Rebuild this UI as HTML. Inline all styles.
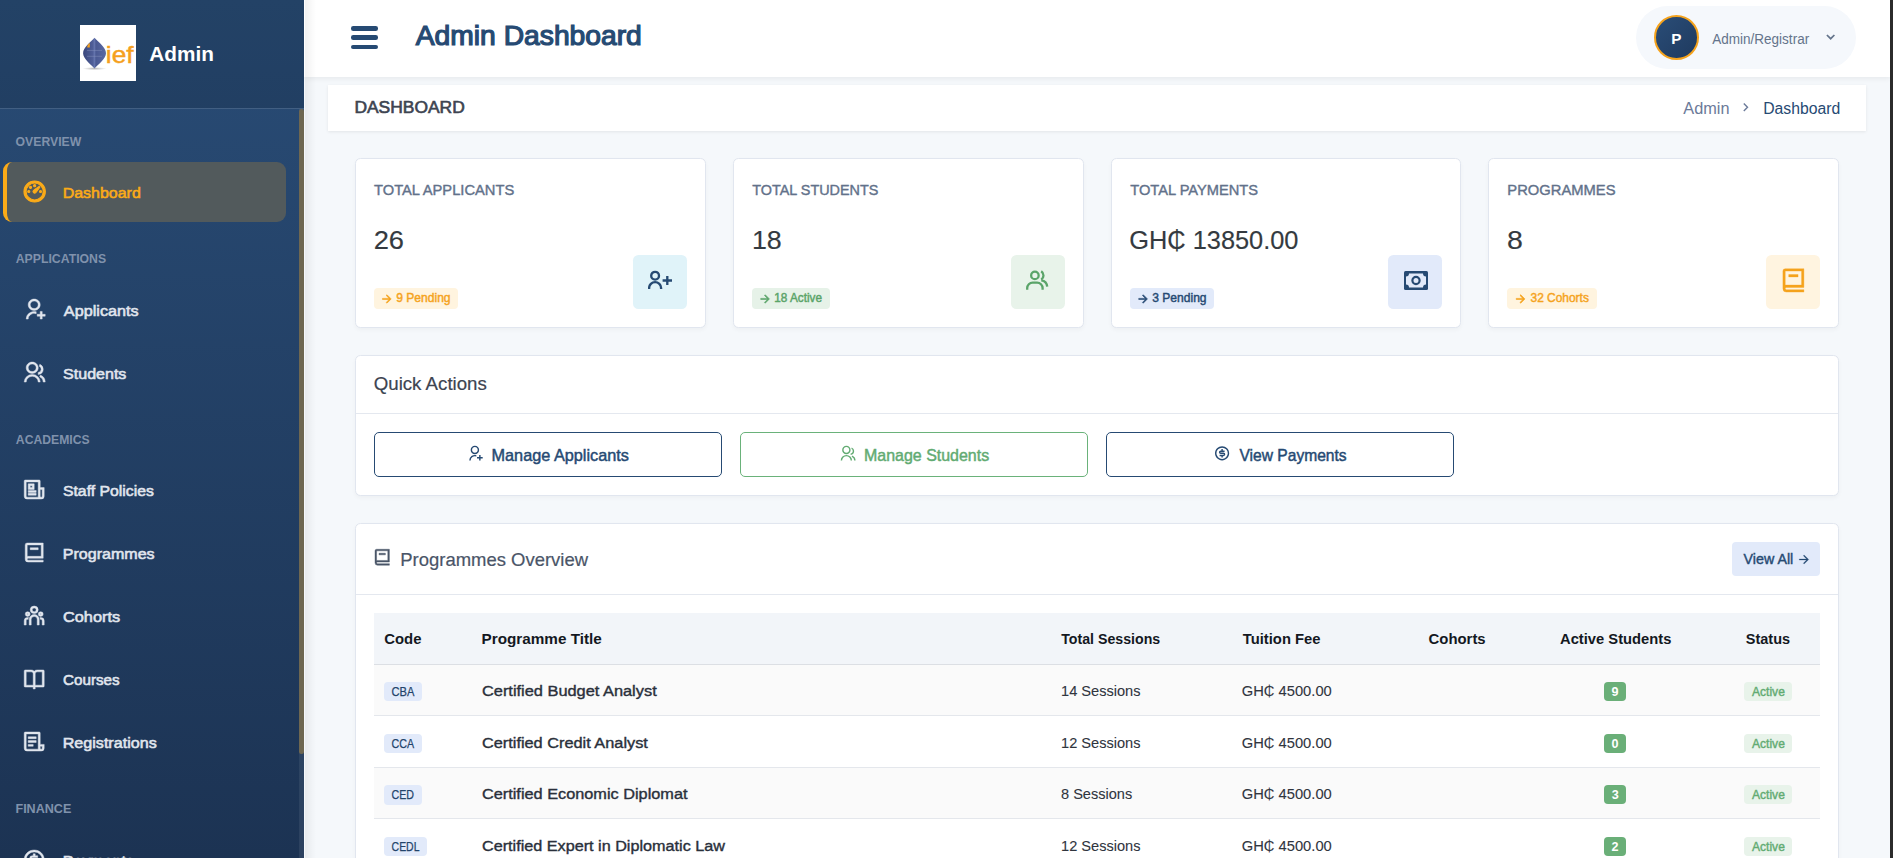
<!DOCTYPE html>
<html lang="en">
<head>
<meta charset="utf-8">
<title>Admin Dashboard</title>
<style>
*{box-sizing:border-box;margin:0;padding:0}
html,body{width:1893px;height:858px;overflow:hidden}
body{position:relative;background:#f5f8fb;font-family:"Liberation Sans",sans-serif;color:#343a40}
.abs,.t{position:absolute}
.t{white-space:nowrap;line-height:1;transform-origin:0 0}
#sidebar{position:absolute;left:0;top:0;width:304px;height:858px;background:linear-gradient(180deg,#294c76 0%,#1c3353 100%);overflow:hidden}
#sbhead{position:absolute;left:0;top:0;width:304px;height:108px;background:rgba(0,0,0,.13)}
#sbline{position:absolute;left:0;top:108px;width:304px;height:1px;background:rgba(255,255,255,.12)}
#logo{position:absolute;left:80px;top:25px;width:56px;height:56px;background:#fff;overflow:hidden}
#active{position:absolute;left:3px;top:162px;width:283px;height:60px;border-radius:9px;background:#525a5c;border-left:4.300px solid #fbab18}
#sbtrack{position:absolute;left:299px;top:109px;width:5px;height:749px;background:rgba(255,255,255,.07)}
#sbthumb{position:absolute;left:299px;top:109px;width:5px;height:644.500px;background:#6e6751;border-radius:2.500px}
#topbar{position:absolute;left:304px;top:0;width:1586px;height:77px;background:#fff;box-shadow:0 2px 5px rgba(0,0,0,.06)}
#rightbar{position:absolute;left:1889.500px;top:0;width:3.500px;height:858px;background:#2b2b2b}
#sbshadow{position:absolute;left:305px;top:0;width:11px;height:858px;background:linear-gradient(90deg,rgba(0,0,0,.055),rgba(0,0,0,0))}
.hb{position:absolute;left:351.250px;width:26.750px;height:4.500px;border-radius:2.250px;background:#264a73}
#pill{position:absolute;left:1636px;top:6px;width:220px;height:63px;border-radius:32px;background:#f5f8fc}
#avatar{position:absolute;left:1654.200px;top:15px;width:44.800px;height:44.800px;border-radius:50%;background:linear-gradient(135deg,#2a4d77,#1f3a5f);border:2.200px solid #f5a31d}
.card{position:absolute;background:#fff;border:1px solid #e1e6ef;border-radius:5.500px;box-shadow:0 2px 4px rgba(0,0,0,.035)}
#crumb{position:absolute;left:328px;top:85px;width:1538.300px;height:45.600px;background:#fff;box-shadow:0 1px 3px rgba(0,0,0,.08)}
.badge{position:absolute;top:288.200px;height:20.500px;border-radius:4px}
.ibox{position:absolute;top:255px;width:53.800px;height:53.800px;border-radius:5.500px}
.btn{position:absolute;top:432px;width:347.800px;height:44.800px;border-radius:5px;background:#fff;border:1.200px solid #264a73}
.hline{position:absolute;height:1px;background:#e4e8ef}
.code{position:absolute;left:384px;height:19.500px;border-radius:4px;background:#e2eafa}
.nbadge{position:absolute;left:1604.250px;width:21.750px;height:18.300px;border-radius:4px;background:#6aaf78}
.abadge{position:absolute;left:1744.250px;width:47.750px;height:18.300px;border-radius:4px;background:#e8f3ea}
</style>
</head>
<body>
<!-- sidebar -->
<div id="sidebar">
  <div id="sbhead"></div>
  <div id="sbline"></div>
  <div id="logo"><svg class="abs" style="left:0;top:0" width="56" height="56" viewBox="0 0 56 56">
<defs><linearGradient id="lg" x1="0" x2="1" y1="0" y2="0"><stop offset="0" stop-color="#39477c"/><stop offset=".42" stop-color="#4f5e98"/><stop offset=".5" stop-color="#6474ad"/><stop offset=".56" stop-color="#4a5992"/><stop offset="1" stop-color="#5a69a3"/></linearGradient>
<radialGradient id="sh" cx=".5" cy=".5" r=".5"><stop offset="0" stop-color="#000" stop-opacity=".28"/><stop offset="1" stop-color="#000" stop-opacity="0"/></radialGradient></defs>
<ellipse cx="14.500" cy="43.600" rx="12" ry="1.600" fill="url(#sh)"/>
<path d="M14.500 12.800C18.500 17.200 26 22.500 26 28.200C26 33.800 18.500 39 14.500 43.400C10.500 39 3.100 33.800 3.100 28.200C3.100 22.500 10.500 17.200 14.500 12.800z" fill="url(#lg)"/>
<path d="M7 25.400h15M7 31.300h15" stroke="#8f9bc2" stroke-width=".5" opacity=".85"/>
<path d="M7.200 22.400c0-2 1.100-3.400 2.600-4.300v4.300z" fill="#f5a01d"/>
</svg></div>
  <div id="active"></div>
  <div id="sbtrack"></div>
  <div id="sbthumb"></div>
</div>
<!-- topbar + breadcrumb -->
<div id="topbar"></div>
<div id="sbshadow"></div>
<div class="hb" style="top:26px"></div>
<div class="hb" style="top:35.250px"></div>
<div class="hb" style="top:44.500px"></div>
<div id="pill"></div>
<div id="avatar"></div>
<div id="crumb"></div>
<!-- stat cards -->
<div class="card" style="left:355px;top:158px;width:351px;height:170px"></div>
<div class="card" style="left:733px;top:158px;width:351px;height:170px"></div>
<div class="card" style="left:1111px;top:158px;width:350px;height:170px"></div>
<div class="card" style="left:1488px;top:158px;width:351px;height:170px"></div>
<div class="badge" style="left:374.25px;width:83.5px;background:#fff4df"></div>
<div class="badge" style="left:752px;width:78px;background:#e6f2e8"></div>
<div class="badge" style="left:1130px;width:84px;background:#e2eafa"></div>
<div class="badge" style="left:1507.25px;width:89.75px;background:#fff4df"></div>
<div class="ibox" style="left:633.25px;background:#e0f3f9"></div>
<div class="ibox" style="left:1011.25px;background:#e8f3ea"></div>
<div class="ibox" style="left:1388.25px;background:#e2eafa"></div>
<div class="ibox" style="left:1766.25px;background:#fff4e0"></div>
<!-- quick actions -->
<div class="card" style="left:355px;top:355px;width:1484px;height:141px"></div>
<div class="hline" style="left:356px;top:413px;width:1482px"></div>
<div class="btn" style="left:374.200px"></div>
<div class="btn" style="left:740.200px;border-color:#6ab27a"></div>
<div class="btn" style="left:1106.200px"></div>
<!-- programmes overview -->
<div class="card" style="left:355px;top:523px;width:1484px;height:400px"></div>
<div class="hline" style="left:356px;top:594px;width:1482px"></div>
<div class="abs" style="left:1732.250px;top:542px;width:87.750px;height:33.750px;border-radius:4px;background:#e2eafa"></div>
<div class="abs" style="left:374px;top:613px;width:1446px;height:51px;background:#f2f5f9"></div>
<div class="abs" style="left:374px;top:664px;width:1446px;height:1px;background:#dcdfe4"></div>
<div class="abs" style="left:374px;top:665px;width:1446px;height:50px;background:#fafafa"></div>
<div class="abs" style="left:374px;top:715px;width:1446px;height:1px;background:#e4e7ec"></div>
<div class="code" style="top:682px;width:37.9px;height:19px"></div>
<div class="nbadge" style="top:682.3px"></div>
<div class="abadge" style="top:682.3px"></div>
<div class="abs" style="left:374px;top:716px;width:1446px;height:51px;background:#fff"></div>
<div class="abs" style="left:374px;top:767px;width:1446px;height:1px;background:#e4e7ec"></div>
<div class="code" style="top:734px;width:37.9px;height:19px"></div>
<div class="nbadge" style="top:734.3px"></div>
<div class="abadge" style="top:734.3px"></div>
<div class="abs" style="left:374px;top:768px;width:1446px;height:50px;background:#fafafa"></div>
<div class="abs" style="left:374px;top:818px;width:1446px;height:1px;background:#e4e7ec"></div>
<div class="code" style="top:785px;width:37.9px;height:20px"></div>
<div class="nbadge" style="top:785.3px"></div>
<div class="abadge" style="top:785.3px"></div>
<div class="abs" style="left:374px;top:819px;width:1446px;height:51px;background:#fff"></div>
<div class="abs" style="left:374px;top:870px;width:1446px;height:1px;background:#e4e7ec"></div>
<div class="code" style="top:837px;width:42.8px;height:19px"></div>
<div class="nbadge" style="top:837.3px"></div>
<div class="abadge" style="top:837.3px"></div>
<!-- icons -->
<svg class="abs" style="left:21px;top:178px" width="28" height="28" viewBox="0 0 28 28" fill="#fbab18" stroke="#fbab18" stroke-width="1.028" stroke-linejoin="round"><path transform="translate(0.81 0.84) scale(1.0700 1.0550)" d="M12 2c5.523 0 10 4.477 10 10s-4.477 10-10 10S2 17.523 2 12 6.477 2 12 2zm0 2a8 8 0 1 0 0 16 8 8 0 0 0 0-16zm3.833 3.337a.596.596 0 0 1 .763.067.59.59 0 0 1 .063.76c-2.18 3.046-3.38 4.678-3.598 4.897a1.5 1.5 0 0 1-2.122-2.122c.374-.373 2.005-1.574 4.894-3.602zM17.5 11a1 1 0 1 1 0 2 1 1 0 0 1 0-2zm-11 0a1 1 0 1 1 0 2 1 1 0 0 1 0-2zm2.318-3.596a1 1 0 1 1-1.414 1.414 1 1 0 0 1 1.414-1.414zM12 5.5a1 1 0 1 1 0 2 1 1 0 0 1 0-2z"/></svg>
<svg class="abs" style="left:22px;top:298px" width="26" height="24" viewBox="0 0 26 24" fill="#e1e6ee" stroke="#e1e6ee" stroke-width="0.450" stroke-linejoin="round"><path transform="translate(0.20 0.10) scale(1.0000 0.9520)" d="M14 14.252v2.09A6 6 0 0 0 6 22l-2-.001a8 8 0 0 1 10-7.748zM12 13c-3.315 0-6-2.685-6-6s2.685-6 6-6 6 2.685 6 6-2.685 6-6 6zm0-2c2.21 0 4-1.79 4-4s-1.79-4-4-4-4 1.79-4 4 1.79 4 4 4zm6 6v-3h2v3h3v2h-3v3h-2v-3h-3v-2h3z"/></svg>
<svg class="abs" style="left:22px;top:361px" width="26" height="24" viewBox="0 0 26 24" fill="#e1e6ee" stroke="#e1e6ee" stroke-width="0.450" stroke-linejoin="round"><path transform="translate(0.20 0.10) scale(1.0000 0.9520)" d="M2 22a8 8 0 1 1 16 0h-2a6 6 0 1 0-12 0H2zm8-9c-3.315 0-6-2.685-6-6s2.685-6 6-6 6 2.685 6 6-2.685 6-6 6zm0-2c2.21 0 4-1.79 4-4s-1.79-4-4-4-4 1.79-4 4 1.79 4 4 4zm8.284 3.703A8.002 8.002 0 0 1 23 22h-2a6.001 6.001 0 0 0-3.537-5.473l.82-1.824zm-.688-11.29A5.5 5.5 0 0 1 21 8.5a5.499 5.499 0 0 1-5 5.478v-2.013a3.5 3.5 0 0 0 1.041-6.609l.555-1.943z"/></svg>
<svg class="abs" style="left:22px;top:478px" width="26" height="24" viewBox="0 0 26 24" fill="#e1e6ee" stroke="#e1e6ee" stroke-width="0.450" stroke-linejoin="round"><path transform="translate(0.20 0.10) scale(1.0000 0.9520)" d="M16 20V4H4v15a1 1 0 0 0 1 1h11zm3 2H5a3 3 0 0 1-3-3V3a1 1 0 0 1 1-1h14a1 1 0 0 1 1 1v7h4v9a3 3 0 0 1-3 3zm-1-10v7a1 1 0 0 0 2 0v-7h-2zM6 6h6v6H6V6zm2 2v2h2V8H8zm-2 5h8v2H6v-2zm0 3h8v2H6v-2z"/></svg>
<svg class="abs" style="left:22px;top:541px" width="26" height="24" viewBox="0 0 26 24" fill="#e1e6ee" stroke="#e1e6ee" stroke-width="0.450" stroke-linejoin="round"><path transform="translate(0.20 0.10) scale(1.0000 0.9520)" d="M21 18H6a1 1 0 0 0 0 2h15v2H6a3 3 0 0 1-3-3V4a2 2 0 0 1 2-2h16v16zM5 16.05c.162-.033.329-.05.5-.05H19V4H5v12.05zM16 9H8V7h8v2z"/></svg>
<svg class="abs" style="left:22px;top:604px" width="26" height="24" viewBox="0 0 26 24" fill="#e1e6ee" stroke="#e1e6ee" stroke-width="0.450" stroke-linejoin="round"><path transform="translate(0.20 0.10) scale(1.0000 0.9520)" d="M12 11a5 5 0 0 1 5 5v6h-2v-6a3 3 0 0 0-2.824-2.995L12 13a3 3 0 0 0-2.995 2.824L9 16v6H7v-6a5 5 0 0 1 5-5zm-6.5 3c.279 0 .55.033.81.094a5.947 5.947 0 0 0-.301 1.575L6 16v.086a1.492 1.492 0 0 0-.356-.08L5.5 16a1.5 1.5 0 0 0-1.493 1.356L4 17.5V22H2v-4.5A3.5 3.5 0 0 1 5.5 14zm13 0a3.5 3.5 0 0 1 3.5 3.500V22h-2v-4.5a1.5 1.5 0 0 0-1.356-1.493L18.5 16c-.175 0-.343.03-.5.085V16c0-.666-.108-1.306-.309-1.904.259-.063.53-.096.809-.096zm-13-6a2.5 2.5 0 1 1 0 5 2.5 2.5 0 0 1 0-5zm13 0a2.5 2.5 0 1 1 0 5 2.5 2.5 0 0 1 0-5zm-13 2a.5.5 0 1 0 0 1 .5.5 0 0 0 0-1zm13 0a.5.5 0 1 0 0 1 .5.5 0 0 0 0-1zM12 2a4 4 0 1 1 0 8 4 4 0 0 1 0-8zm0 2a2 2 0 1 0 0 4 2 2 0 0 0 0-4z"/></svg>
<svg class="abs" style="left:22px;top:667px" width="26" height="24" viewBox="0 0 26 24" fill="#e1e6ee" stroke="#e1e6ee" stroke-width="0.450" stroke-linejoin="round"><path transform="translate(0.20 0.10) scale(1.0000 0.9520)" d="M13 21v2h-2v-2H3a1 1 0 0 1-1-1V4a1 1 0 0 1 1-1h6a3.99 3.99 0 0 1 3 1.354A3.99 3.99 0 0 1 15 3h6a1 1 0 0 1 1 1v16a1 1 0 0 1-1 1h-8zm7-2V5h-5a2 2 0 0 0-2 2v12h7zm-9 0V7a2 2 0 0 0-2-2H4v14h7z"/></svg>
<svg class="abs" style="left:22px;top:730px" width="26" height="24" viewBox="0 0 26 24" fill="#e1e6ee" stroke="#e1e6ee" stroke-width="0.450" stroke-linejoin="round"><path transform="translate(0.20 0.10) scale(1.0000 0.9520)" d="M19 22H5a3 3 0 0 1-3-3V3a1 1 0 0 1 1-1h14a1 1 0 0 1 1 1v12h4v4a3 3 0 0 1-3 3zm-1-5v2a1 1 0 0 0 2 0v-2h-2zm-2 3V4H4v15a1 1 0 0 0 1 1h11zM6 7h8v2H6V7zm0 4h8v2H6v-2zm0 4h5v2H6v-2z"/></svg>
<svg class="abs" style="left:22px;top:848px" width="26" height="24" viewBox="0 0 26 24" fill="#e1e6ee" stroke="#e1e6ee" stroke-width="0.450" stroke-linejoin="round"><path transform="translate(0.20 0.10) scale(1.0000 0.9520)" d="M12 22C6.477 22 2 17.523 2 12S6.477 2 12 2s10 4.477 10 10-4.477 10-10 10zm0-2a8 8 0 1 0 0-16 8 8 0 0 0 0 16zm-3.5-6H14a.5.5 0 1 0 0-1h-4a2.5 2.5 0 1 1 0-5h1V6h2v2h2.5v2H10a.5.5 0 1 0 0 1h4a2.5 2.5 0 1 1 0 5h-1v2h-2v-2H8.5v-2z"/></svg>
<svg class="abs" style="left:648px;top:270px" width="26" height="22" viewBox="0 0 26 22" fill="none" stroke="#264a73" stroke-width="2.350"><circle cx="7.1" cy="5.7" r="3.9"/><path d="M1.1 19v-.9a6 6 0 0 1 12 0v.9"/><path d="M14.600 10.500h9.400M19.300 6v9"/></svg>
<svg class="abs" style="left:1024px;top:268px" width="26" height="24" viewBox="0 0 26 24" fill="none" stroke="#5aa469" stroke-width="2.3"><circle cx="10.9" cy="7.4" r="3.75"/><path d="M3.200 21.700v-1.600a5.500 5.500 0 0 1 5.500-5.500h4.400a5.500 5.500 0 0 1 5.500 5.500v1.600"/><path d="M17.200 3.200a5 5 0 0 1 0 8.400"/><path d="M17.300 12.300A7 7 0 0 1 23.200 18.700"/></svg>
<svg class="abs" style="left:1404px;top:271px" width="24" height="19" viewBox="0 0 24 19"><rect x="0" y="0" width="24" height="19" rx="1.5" fill="#264a73"/><path d="M5 2.500h14a3 3 0 0 0 3 3v8a3 3 0 0 0-3 3H5a3 3 0 0 0-3-3v-8a3 3 0 0 0 3-3z" fill="#e2eafa"/><circle cx="12" cy="9.500" r="3.600" fill="none" stroke="#264a73" stroke-width="2.200"/></svg>
<svg class="abs" style="left:1779px;top:266px" width="30" height="30" viewBox="0 0 30 30" fill="#f5a31d" stroke="#f5a31d" stroke-width="0.300" stroke-linejoin="round"><path transform="translate(0.40 0.40) scale(1.1667 1.1667)" d="M21 18H6a1 1 0 0 0 0 2h15v2H6a3 3 0 0 1-3-3V4a2 2 0 0 1 2-2h16v16zM5 16.05c.162-.033.329-.05.5-.05H19V4H5v12.05zM16 9H8V7h8v2z"/></svg>
<svg class="abs" style="left:380px;top:292px" width="15" height="15" viewBox="0 0 15 15" fill="#f5a31d" stroke="#f5a31d" stroke-width="1.099" stroke-linejoin="round"><path transform="translate(0.30 0.40) scale(0.5458 0.5458)" d="M16.172 11l-5.364-5.364 1.414-1.414L20 12l-7.778 7.778-1.414-1.414L16.172 13H4v-2z"/></svg>
<svg class="abs" style="left:758px;top:292px" width="15" height="15" viewBox="0 0 15 15" fill="#5aa469" stroke="#5aa469" stroke-width="1.099" stroke-linejoin="round"><path transform="translate(0.55 0.40) scale(0.5458 0.5458)" d="M16.172 11l-5.364-5.364 1.414-1.414L20 12l-7.778 7.778-1.414-1.414L16.172 13H4v-2z"/></svg>
<svg class="abs" style="left:1136px;top:292px" width="15" height="15" viewBox="0 0 15 15" fill="#264a73" stroke="#264a73" stroke-width="1.099" stroke-linejoin="round"><path transform="translate(0.55 0.40) scale(0.5458 0.5458)" d="M16.172 11l-5.364-5.364 1.414-1.414L20 12l-7.778 7.778-1.414-1.414L16.172 13H4v-2z"/></svg>
<svg class="abs" style="left:1514px;top:292px" width="15" height="15" viewBox="0 0 15 15" fill="#f5a31d" stroke="#f5a31d" stroke-width="1.099" stroke-linejoin="round"><path transform="translate(0.05 0.40) scale(0.5458 0.5458)" d="M16.172 11l-5.364-5.364 1.414-1.414L20 12l-7.778 7.778-1.414-1.414L16.172 13H4v-2z"/></svg>
<svg class="abs" style="left:466px;top:445px" width="19" height="18" viewBox="0 0 19 18" fill="#264a73"><path transform="translate(0.40 0.00) scale(0.7083 0.7083)" d="M14 14.252v2.09A6 6 0 0 0 6 22l-2-.001a8 8 0 0 1 10-7.748zM12 13c-3.315 0-6-2.685-6-6s2.685-6 6-6 6 2.685 6 6-2.685 6-6 6zm0-2c2.21 0 4-1.79 4-4s-1.79-4-4-4-4 1.79-4 4 1.79 4 4 4zm6 6v-3h2v3h3v2h-3v3h-2v-3h-3v-2h3z"/></svg>
<svg class="abs" style="left:839px;top:445px" width="19" height="18" viewBox="0 0 19 18" fill="#62ab72"><path transform="translate(0.30 0.00) scale(0.7083 0.7083)" d="M2 22a8 8 0 1 1 16 0h-2a6 6 0 1 0-12 0H2zm8-9c-3.315 0-6-2.685-6-6s2.685-6 6-6 6 2.685 6 6-2.685 6-6 6zm0-2c2.21 0 4-1.79 4-4s-1.79-4-4-4-4 1.79-4 4 1.79 4 4 4zm8.284 3.703A8.002 8.002 0 0 1 23 22h-2a6.001 6.001 0 0 0-3.537-5.473l.82-1.824zm-.688-11.29A5.5 5.5 0 0 1 21 8.5a5.499 5.499 0 0 1-5 5.478v-2.013a3.5 3.5 0 0 0 1.041-6.609l.555-1.943z"/></svg>
<svg class="abs" style="left:1213px;top:444px" width="19" height="19" viewBox="0 0 19 19" fill="#264a73"><path transform="translate(0.60 0.80) scale(0.7083 0.7083)" d="M12 22C6.477 22 2 17.523 2 12S6.477 2 12 2s10 4.477 10 10-4.477 10-10 10zm0-2a8 8 0 1 0 0-16 8 8 0 0 0 0 16zm-3.5-6H14a.5.5 0 1 0 0-1h-4a2.5 2.5 0 1 1 0-5h1V6h2v2h2.5v2H10a.5.5 0 1 0 0 1h4a2.5 2.5 0 1 1 0 5h-1v2h-2v-2H8.5v-2z"/></svg>
<svg class="abs" style="left:372px;top:547px" width="21" height="21" viewBox="0 0 21 21" fill="#4a5568" stroke="#4a5568" stroke-width="0.500" stroke-linejoin="round"><path transform="translate(0.60 0.65) scale(0.8000 0.8000)" d="M21 18H6a1 1 0 0 0 0 2h15v2H6a3 3 0 0 1-3-3V4a2 2 0 0 1 2-2h16v16zM5 16.05c.162-.033.329-.05.5-.05H19V4H5v12.05zM16 9H8V7h8v2z"/></svg>
<svg class="abs" style="left:1796px;top:552px" width="17" height="16" viewBox="0 0 17 16" fill="#264a73" stroke="#264a73" stroke-width="0.338" stroke-linejoin="round"><path transform="translate(0.90 0.40) scale(0.5917 0.5917)" d="M16.172 11l-5.364-5.364 1.414-1.414L20 12l-7.778 7.778-1.414-1.414L16.172 13H4v-2z"/></svg>
<svg class="abs" style="left:1825px;top:33px" width="12" height="9" viewBox="0 0 12 9" fill="none" stroke="#64748b" stroke-width="1.700"><path d="M1.900 2l3.750 3.700L9.400 2"/></svg>
<svg class="abs" style="left:1742px;top:102px" width="9" height="11" viewBox="0 0 9 11" fill="none" stroke="#6b7a99" stroke-width="1.400"><path d="M1.800 1.500l3.700 3.700-3.700 3.700"/></svg>
<!-- text -->
<div class="t" style="left:149px;top:45px;font-size:19.5px;color:#fff;font-weight:bold;transform:translateX(0.37px) scaleX(1.0627)">Admin</div>
<div class="t" style="left:15px;top:136px;font-size:12.7px;color:#8092ac;font-weight:bold;transform:translateX(0.62px) scaleX(0.9624)">OVERVIEW</div>
<div class="t" style="left:62px;top:186px;font-size:14.79px;color:#fbab18;-webkit-text-stroke:0.55px #fbab18;transform:translateX(0.72px) scaleX(1.0799)">Dashboard</div>
<div class="t" style="left:15px;top:253px;font-size:12.7px;color:#8092ac;font-weight:bold;transform:translateX(0.76px) scaleX(0.9660)">APPLICATIONS</div>
<div class="t" style="left:63px;top:304px;font-size:14.79px;color:#e1e6ee;-webkit-text-stroke:0.55px #e1e6ee;transform:translateX(0.87px) scaleX(1.0960)">Applicants</div>
<div class="t" style="left:63px;top:367px;font-size:14.79px;color:#e1e6ee;-webkit-text-stroke:0.55px #e1e6ee;transform:translateX(0.06px) scaleX(1.0852)">Students</div>
<div class="t" style="left:15px;top:434px;font-size:12.7px;color:#8092ac;font-weight:bold;transform:translateX(0.86px) scaleX(0.9592)">ACADEMICS</div>
<div class="t" style="left:62px;top:484px;font-size:14.79px;color:#e1e6ee;-webkit-text-stroke:0.55px #e1e6ee;transform:translateX(0.97px) scaleX(1.0663)">Staff Policies</div>
<div class="t" style="left:62px;top:547px;font-size:14.79px;color:#e1e6ee;-webkit-text-stroke:0.55px #e1e6ee;transform:translateX(0.82px) scaleX(1.0847)">Programmes</div>
<div class="t" style="left:62px;top:610px;font-size:14.79px;color:#e1e6ee;-webkit-text-stroke:0.55px #e1e6ee;transform:translateX(0.95px) scaleX(1.1039)">Cohorts</div>
<div class="t" style="left:62px;top:673px;font-size:14.79px;color:#e1e6ee;-webkit-text-stroke:0.55px #e1e6ee;transform:translateX(0.98px) scaleX(1.0304)">Courses</div>
<div class="t" style="left:62px;top:736px;font-size:14.79px;color:#e1e6ee;-webkit-text-stroke:0.55px #e1e6ee;transform:translateX(0.71px) scaleX(1.0894)">Registrations</div>
<div class="t" style="left:15px;top:803px;font-size:12.7px;color:#8092ac;font-weight:bold;transform:translateX(0.46px) scaleX(0.9900)">FINANCE</div>
<div class="t" style="left:62px;top:854px;font-size:14.79px;color:#e1e6ee;-webkit-text-stroke:0.55px #e1e6ee;transform:translateX(0.82px) scaleX(1.0837)">Payments</div>
<div class="t" style="left:415px;top:23px;font-size:26.96px;color:#264a73;-webkit-text-stroke:1.2px #264a73;transform:translateX(0.79px) scaleX(1.0476)">Admin Dashboard</div>
<div class="t" style="left:1671px;top:32px;font-size:14.5px;color:#fff;font-weight:bold;transform:translateX(0.25px) scaleX(1.0545)">P</div>
<div class="t" style="left:1712px;top:33px;font-size:13.8px;color:#64748b;transform:translateX(0.20px) scaleX(0.9803)">Admin/Registrar</div>
<div class="t" style="left:354px;top:99px;font-size:16.03px;color:#3d4451;-webkit-text-stroke:0.6px #3d4451;transform:translateX(0.41px) scaleX(1.0875)">DASHBOARD</div>
<div class="t" style="left:1683px;top:101px;font-size:15.6px;color:#6b7a99;transform:translateX(0.30px) scaleX(1.0451)">Admin</div>
<div class="t" style="left:1763px;top:101px;font-size:15.6px;color:#264a73;transform:translateX(0.14px) scaleX(1.0108)">Dashboard</div>
<div class="t" style="left:374px;top:182px;font-size:15.15px;color:#62718a;-webkit-text-stroke:0.4px #62718a;transform:translateX(0.01px) scaleX(0.9704)">TOTAL APPLICANTS</div>
<div class="t" style="left:752px;top:182px;font-size:15.15px;color:#62718a;-webkit-text-stroke:0.4px #62718a;transform:translateX(0.26px) scaleX(0.9508)">TOTAL STUDENTS</div>
<div class="t" style="left:1130px;top:182px;font-size:15.15px;color:#62718a;-webkit-text-stroke:0.4px #62718a;transform:translateX(0.26px) scaleX(0.9676)">TOTAL PAYMENTS</div>
<div class="t" style="left:1507px;top:182px;font-size:15.15px;color:#62718a;-webkit-text-stroke:0.4px #62718a;transform:translateX(0.28px) scaleX(0.9749)">PROGRAMMES</div>
<div class="t" style="left:373px;top:228px;font-size:25.33px;color:#343a40;-webkit-text-stroke:0.15px #343a40;transform:translateX(0.65px) scaleX(1.0769)">26</div>
<div class="t" style="left:751px;top:228px;font-size:25.33px;color:#343a40;-webkit-text-stroke:0.15px #343a40;transform:translateX(0.90px) scaleX(1.0588)">18</div>
<div class="t" style="left:1129px;top:228px;font-size:25.33px;color:#343a40;-webkit-text-stroke:0.15px #343a40;transform:translateX(0.25px) scaleX(1.0015)">GH₵ 13850.00</div>
<div class="t" style="left:1507px;top:228px;font-size:25.33px;color:#343a40;-webkit-text-stroke:0.15px #343a40;transform:translateX(0.12px) scaleX(1.1250)">8</div>
<div class="t" style="left:396px;top:292px;font-size:12.4px;color:#f5a31d;-webkit-text-stroke:0.45px #f5a31d;transform:translateX(0.26px) scaleX(0.9727)">9 Pending</div>
<div class="t" style="left:774px;top:292px;font-size:12.4px;color:#5aa469;-webkit-text-stroke:0.45px #5aa469;transform:translateX(0.29px) scaleX(0.9492)">18 Active</div>
<div class="t" style="left:1152px;top:292px;font-size:12.4px;color:#264a73;-webkit-text-stroke:0.45px #264a73;transform:translateX(0.26px) scaleX(0.9727)">3 Pending</div>
<div class="t" style="left:1530px;top:292px;font-size:12.4px;color:#f5a31d;-webkit-text-stroke:0.45px #f5a31d;transform:translateX(0.51px) scaleX(0.9627)">32 Cohorts</div>
<div class="t" style="left:373px;top:375px;font-size:18.58px;color:#3d4451;-webkit-text-stroke:0.2px #3d4451;transform:translateX(0.75px) scaleX(1.0045)">Quick Actions</div>
<div class="t" style="left:491px;top:447px;font-size:16.1px;color:#264a73;-webkit-text-stroke:0.45px #264a73;transform:translateX(0.49px) scaleX(1.0111)">Manage Applicants</div>
<div class="t" style="left:864px;top:447px;font-size:16.1px;color:#62ab72;-webkit-text-stroke:0.45px #62ab72;transform:translateX(0.01px) scaleX(0.9920)">Manage Students</div>
<div class="t" style="left:1239px;top:447px;font-size:16.1px;color:#264a73;-webkit-text-stroke:0.45px #264a73;transform:translateX(0.49px) scaleX(0.9683)">View Payments</div>
<div class="t" style="left:400px;top:551px;font-size:18.28px;color:#4a5568;-webkit-text-stroke:0.2px #4a5568;transform:translateX(0.23px) scaleX(1.0108)">Programmes Overview</div>
<div class="t" style="left:1743px;top:553px;font-size:13.85px;color:#264a73;-webkit-text-stroke:0.4px #264a73;transform:translateX(0.51px) scaleX(1.0314)">View All</div>
<div class="t" style="left:384px;top:631px;font-size:15.5px;color:#14181f;font-weight:bold;transform:translateX(0.28px) scaleX(0.9600)">Code</div>
<div class="t" style="left:481px;top:631px;font-size:15.5px;color:#14181f;font-weight:bold;transform:translateX(0.51px) scaleX(0.9855)">Programme Title</div>
<div class="t" style="left:1061px;top:631px;font-size:15.5px;color:#14181f;font-weight:bold;transform:translateX(0.27px) scaleX(0.9138)">Total Sessions</div>
<div class="t" style="left:1242px;top:631px;font-size:15.5px;color:#14181f;font-weight:bold;transform:translateX(0.76px) scaleX(0.9536)">Tuition Fee</div>
<div class="t" style="left:1428px;top:631px;font-size:15.5px;color:#14181f;font-weight:bold;transform:translateX(0.53px) scaleX(0.9612)">Cohorts</div>
<div class="t" style="left:1560px;top:631px;font-size:15.5px;color:#14181f;font-weight:bold;transform:translateX(0.02px) scaleX(0.9504)">Active Students</div>
<div class="t" style="left:1745px;top:631px;font-size:15.5px;color:#14181f;font-weight:bold;transform:translateX(0.78px) scaleX(0.9351)">Status</div>
<div class="t" style="left:391px;top:686px;font-size:12.72px;color:#23446b;-webkit-text-stroke:0.25px #23446b;transform:translateX(0.56px) scaleX(0.8738)">CBA</div>
<div class="t" style="left:481px;top:683px;font-size:15.08px;color:#2a303b;-webkit-text-stroke:0.38px #2a303b;transform:translateX(0.96px) scaleX(1.0857)">Certified Budget Analyst</div>
<div class="t" style="left:1061px;top:683px;font-size:15.39px;color:#30353e;-webkit-text-stroke:0.1px #30353e;transform:translateX(0.05px) scaleX(0.9483)">14 Sessions</div>
<div class="t" style="left:1241px;top:683px;font-size:15.39px;color:#30353e;-webkit-text-stroke:0.1px #30353e;transform:translateX(0.78px) scaleX(0.9569)">GH₵ 4500.00</div>
<div class="t" style="left:1611px;top:686px;font-size:12.6px;color:#fff;font-weight:bold;transform:translateX(0.60px) scaleX(1.0000)">9</div>
<div class="t" style="left:1751px;top:686px;font-size:12.25px;color:#62ab72;-webkit-text-stroke:0.4px #62ab72;transform:translateX(1.00px) scaleX(0.9850)">Active</div>
<div class="t" style="left:391px;top:738px;font-size:12.72px;color:#23446b;-webkit-text-stroke:0.25px #23446b;transform:translateX(0.58px) scaleX(0.8396)">CCA</div>
<div class="t" style="left:481px;top:735px;font-size:15.08px;color:#2a303b;-webkit-text-stroke:0.38px #2a303b;transform:translateX(0.96px) scaleX(1.0817)">Certified Credit Analyst</div>
<div class="t" style="left:1061px;top:735px;font-size:15.39px;color:#30353e;-webkit-text-stroke:0.1px #30353e;transform:translateX(0.05px) scaleX(0.9483)">12 Sessions</div>
<div class="t" style="left:1241px;top:735px;font-size:15.39px;color:#30353e;-webkit-text-stroke:0.1px #30353e;transform:translateX(0.78px) scaleX(0.9569)">GH₵ 4500.00</div>
<div class="t" style="left:1611px;top:738px;font-size:12.6px;color:#fff;font-weight:bold;transform:translateX(0.60px) scaleX(1.0000)">0</div>
<div class="t" style="left:1751px;top:738px;font-size:12.25px;color:#62ab72;-webkit-text-stroke:0.4px #62ab72;transform:translateX(1.00px) scaleX(0.9850)">Active</div>
<div class="t" style="left:391px;top:789px;font-size:12.72px;color:#23446b;-webkit-text-stroke:0.25px #23446b;transform:translateX(0.58px) scaleX(0.8365)">CED</div>
<div class="t" style="left:481px;top:786px;font-size:15.08px;color:#2a303b;-webkit-text-stroke:0.38px #2a303b;transform:translateX(0.96px) scaleX(1.0804)">Certified Economic Diplomat</div>
<div class="t" style="left:1061px;top:786px;font-size:15.39px;color:#30353e;-webkit-text-stroke:0.1px #30353e;transform:translateX(0.03px) scaleX(0.9461)">8 Sessions</div>
<div class="t" style="left:1241px;top:786px;font-size:15.39px;color:#30353e;-webkit-text-stroke:0.1px #30353e;transform:translateX(0.78px) scaleX(0.9569)">GH₵ 4500.00</div>
<div class="t" style="left:1611px;top:789px;font-size:12.6px;color:#fff;font-weight:bold;transform:translateX(0.72px) scaleX(1.0000)">3</div>
<div class="t" style="left:1751px;top:789px;font-size:12.25px;color:#62ab72;-webkit-text-stroke:0.4px #62ab72;transform:translateX(1.00px) scaleX(0.9850)">Active</div>
<div class="t" style="left:391px;top:841px;font-size:12.72px;color:#23446b;-webkit-text-stroke:0.25px #23446b;transform:translateX(0.59px) scaleX(0.8211)">CEDL</div>
<div class="t" style="left:481px;top:838px;font-size:15.08px;color:#2a303b;-webkit-text-stroke:0.38px #2a303b;transform:translateX(0.96px) scaleX(1.0739)">Certified Expert in Diplomatic Law</div>
<div class="t" style="left:1061px;top:838px;font-size:15.39px;color:#30353e;-webkit-text-stroke:0.1px #30353e;transform:translateX(0.05px) scaleX(0.9483)">12 Sessions</div>
<div class="t" style="left:1241px;top:838px;font-size:15.39px;color:#30353e;-webkit-text-stroke:0.1px #30353e;transform:translateX(0.78px) scaleX(0.9569)">GH₵ 4500.00</div>
<div class="t" style="left:1611px;top:841px;font-size:12.6px;color:#fff;font-weight:bold;transform:translateX(0.60px) scaleX(1.0000)">2</div>
<div class="t" style="left:1751px;top:841px;font-size:12.25px;color:#62ab72;-webkit-text-stroke:0.4px #62ab72;transform:translateX(1.00px) scaleX(0.9850)">Active</div>
<div class="t" style="left:105px;top:43px;font-size:24.44px;color:#f5a01d;-webkit-text-stroke:0.5px #f5a01d;transform:translateX(0.86px) scaleX(1.0747)">ief</div>
<div id="rightbar"></div>
</body>
</html>
